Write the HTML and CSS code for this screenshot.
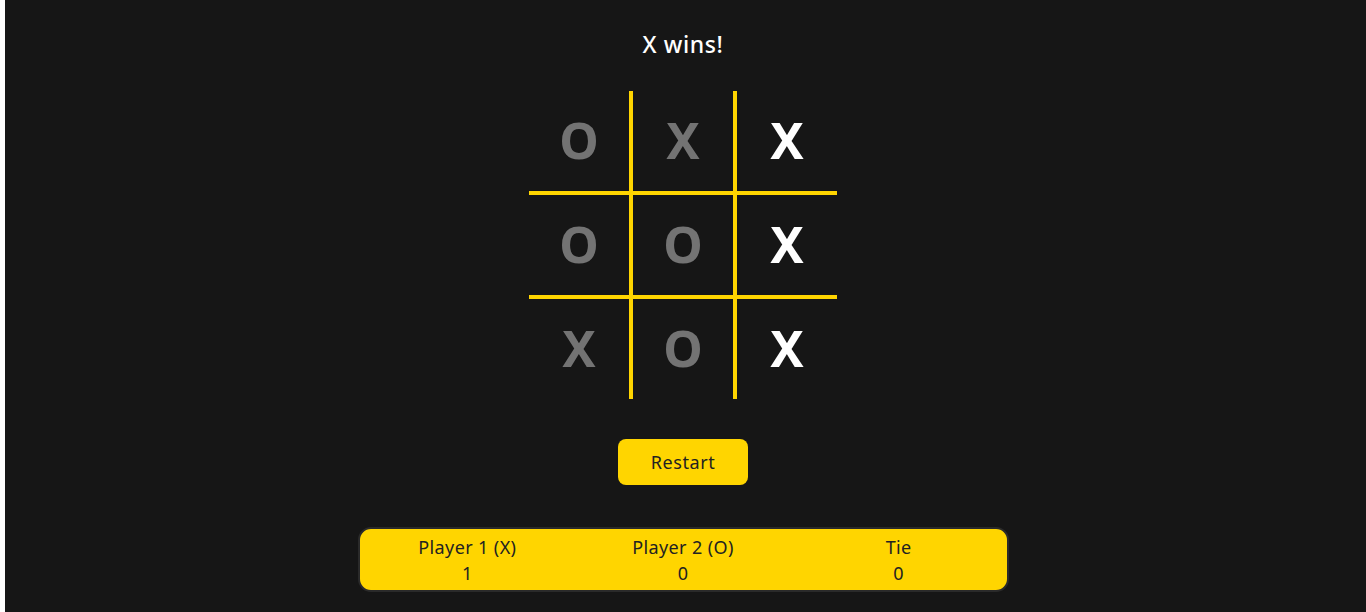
FILE: index.html
```html
<!DOCTYPE html>
<html lang="en">
<head>
<meta charset="utf-8">
<title>Tic Tac Toe</title>
<link rel="stylesheet" href="styles.css">
</head>
<body>
<main class="app">
  <h1 class="status">X wins!</h1>
  <div class="board">
    <div class="cell o">O</div>
    <div class="cell x">X</div>
    <div class="cell x win">X</div>
    <div class="cell o">O</div>
    <div class="cell o">O</div>
    <div class="cell x win">X</div>
    <div class="cell x">X</div>
    <div class="cell o">O</div>
    <div class="cell x win">X</div>
  </div>
  <button class="restart">Restart</button>
  <div class="scores">
    <div class="score"><span class="label">Player 1 (X)</span><span class="value">1</span></div>
    <div class="score"><span class="label">Player 2 (O)</span><span class="value">0</span></div>
    <div class="score"><span class="label">Tie</span><span class="value">0</span></div>
  </div>
</main>
</body>
</html>
```

FILE: styles.css
```css
html {
  background: #ffffff;
}
body {
  margin: 0 0 0 5px;
  min-height: 612px;
  background: #161616;
  font-family: "Noto Sans", "Open Sans", sans-serif;
  color: #ffffff;
}
.app {
  display: flex;
  flex-direction: column;
  align-items: center;
  padding-top: 29px;
  margin-left: -5px;
}
.status {
  margin: 0;
  font-size: 23px;
  font-weight: 500;
  letter-spacing: 0.6px;
  line-height: 30px;
  height: 30px;
}
.board {
  margin-top: 32px;
  display: grid;
  grid-template-columns: repeat(3, 100px);
  grid-template-rows: repeat(3, 100px);
  gap: 4px;
  background: #ffd500;
}
.cell {
  background: #161616;
  display: flex;
  align-items: center;
  justify-content: center;
  padding-bottom: 3px;
  box-sizing: border-box;
  font-size: 50px;
  font-weight: 700;
  color: #737373;
  line-height: 1;
}
.cell.win {
  color: #ffffff;
}
.restart {
  margin-top: 40px;
  width: 130px;
  height: 46px;
  border: none;
  border-radius: 8px;
  background: #ffd500;
  color: #222222;
  font-family: inherit;
  font-size: 18px;
  letter-spacing: 0.6px;
  cursor: pointer;
}
.scores {
  margin-top: 42px;
  width: 651px;
  height: 65px;
  box-sizing: border-box;
  border: 2px solid #2a2a2a;
  border-radius: 13px;
  background: #ffd500;
  display: grid;
  grid-template-columns: repeat(3, 1fr);
  align-items: center;
  color: #222222;
}
.score {
  display: flex;
  flex-direction: column;
  align-items: center;
  font-size: 18px;
  letter-spacing: 0.4px;
  line-height: 26px;
}
```
